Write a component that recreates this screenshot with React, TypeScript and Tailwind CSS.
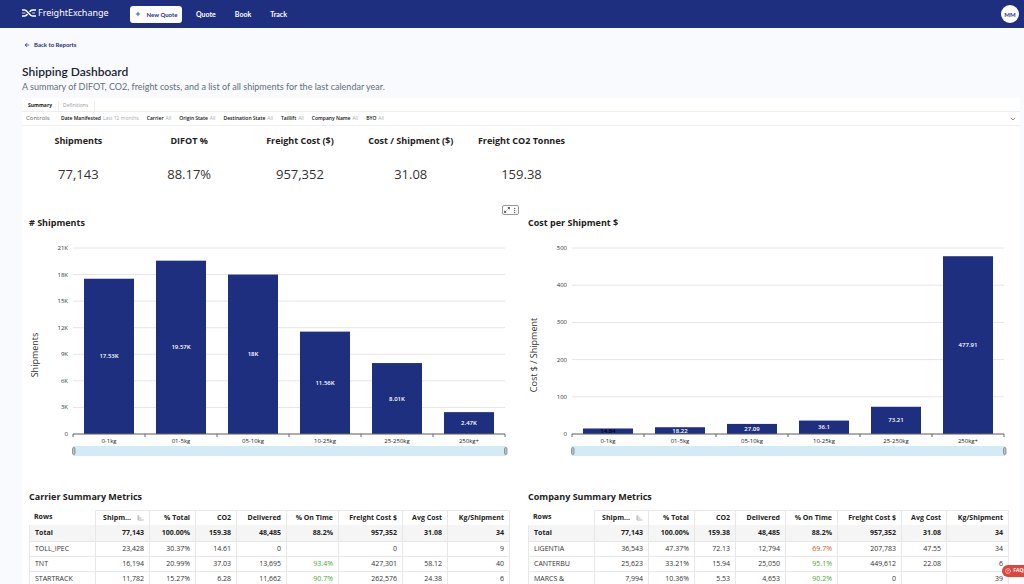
import React, { useState } from 'react';
import { ArrowLeft, ChevronDown, CircleHelp, EllipsisVertical, Plus } from 'lucide-react';
import clsx from 'clsx';

const filters = [
  { label: 'Date Manifested', value: 'Last 12 months' },
  { label: 'Carrier', value: 'All' },
  { label: 'Origin State', value: 'All' },
  { label: 'Destination State', value: 'All' },
  { label: 'Taillift', value: 'All' },
  { label: 'Company Name', value: 'All' },
  { label: 'BYO', value: 'All' },
];

const metrics = [
  { label: 'Shipments', value: '77,143' },
  { label: 'DIFOT %', value: '88.17%' },
  { label: 'Freight Cost ($)', value: '957,352' },
  { label: 'Cost / Shipment ($)', value: '31.08' },
  { label: 'Freight CO2 Tonnes', value: '159.38' },
];

type Bar = { name: string; value: number; label: string; dark?: boolean };

const shipments: Bar[] = [
  { name: '0-1kg', value: 17.53, label: '17.53K' },
  { name: '01-5kg', value: 19.57, label: '19.57K' },
  { name: '05-10kg', value: 18, label: '18K' },
  { name: '10-25kg', value: 11.56, label: '11.56K' },
  { name: '25-250kg', value: 8.01, label: '8.01K' },
  { name: '250kg+', value: 2.47, label: '2.47K' },
];

const costs: Bar[] = [
  { name: '0-1kg', value: 14.84, label: '14.84', dark: true },
  { name: '01-5kg', value: 18.22, label: '18.22' },
  { name: '05-10kg', value: 27.09, label: '27.09' },
  { name: '10-25kg', value: 36.1, label: '36.1' },
  { name: '25-250kg', value: 73.21, label: '73.21' },
  { name: '250kg+', value: 477.91, label: '477.91' },
];

const columns = [
  { name: 'Rows', width: 'w-[67px]' },
  { name: 'Shipm...', width: 'w-[54px]' },
  { name: '% Total', width: 'w-[46px]' },
  { name: 'CO2', width: 'w-[41px]' },
  { name: 'Delivered', width: 'w-[50px]' },
  { name: '% On Time', width: 'w-[52px]' },
  { name: 'Freight Cost $', width: 'w-[64px]' },
  { name: 'Avg Cost', width: 'w-[45px]' },
  { name: 'Kg/Shipment', width: 'w-[62px]' },
];

const total = ['Total', '77,143', '100.00%', '159.38', '48,485', '88.2%', '957,352', '31.08', '34'];

const carrierRows = [
  total,
  ['TOLL_IPEC', '23,428', '30.37%', '14.61', '0', '', '0', '', '9'],
  ['TNT', '16,194', '20.99%', '37.03', '13,695', '93.4%', '427,301', '58.12', '40'],
  ['STARTRACK', '11,782', '15.27%', '6.28', '11,662', '90.7%', '262,576', '24.38', '6'],
];

const companyRows = [
  total,
  ['LIGENTIA', '36,543', '47.37%', '72.13', '12,794', '69.7%', '207,783', '47.55', '34'],
  ['CANTERBU', '25,623', '33.21%', '15.94', '25,050', '95.1%', '449,612', '22.08', '6'],
  ['MARCS &', '7,994', '10.36%', '5.53', '4,653', '90.2%', '0', '', '39'],
];

function Logo() {
  return (
    <a href="#" className="flex w-[108px] items-center gap-0.5 pb-0.5 text-white">
      <svg width="14" height="8" viewBox="0 0 14 8" fill="none" stroke="currentColor" strokeWidth="1.5">
        <path d="M0 1h2.6C5.6 1 7.4 7 10.6 7H14" />
        <path d="M0 7h2.6C3.8 7 4.8 6 5.6 5M7.6 2.8C8.4 1.8 9.4 1 10.6 1H14" />
        <path d="M0 4h3.4M10 4h3" strokeWidth="0.8" />
      </svg>
      <span className="font-['Noto_Sans',sans-serif] text-[9px] leading-3">FreightExchange</span>
    </a>
  );
}

function Header() {
  return (
    <header className="flex h-7 items-center bg-[#1f2f80] pl-[22px] pr-[5px] font-['Lato',sans-serif] text-white">
      <Logo />
      <button className="flex h-[17px] w-[52px] items-center justify-center gap-1.5 rounded-[3px] bg-white text-[6px] font-bold text-[#1f2f80]">
        <Plus size={6} strokeWidth={3} />
        New Quote
      </button>
      <nav className="ml-3.5 flex gap-[19px] text-[7px] font-bold">
        <a href="#">Quote</a>
        <a href="#">Book</a>
        <a href="#">Track</a>
      </nav>
      <button className="ml-auto flex size-[18px] items-center justify-center rounded-full bg-white text-[6px] font-bold text-[#1f2f80]">
        MM
      </button>
    </header>
  );
}

function Controls() {
  const [open, setOpen] = useState(false);

  return (
    <div className="flex h-3.5 items-center border-b border-[#f0f0f0] pl-1 pr-[3px]">
      <span className="w-[35px] text-[6px] text-[#666]">Controls</span>
      <div className="flex gap-2 text-[5px]">
        {filters.map((filter) => (
          <div key={filter.label} className="flex gap-0.5 whitespace-nowrap">
            <span className="font-semibold text-[#111]">{filter.label}</span>
            <span className="text-[#aaa]">{filter.value}</span>
          </div>
        ))}
      </div>
      <button className="ml-auto text-[#555]" aria-label="Toggle controls" onClick={() => setOpen(!open)}>
        <ChevronDown size={8} className={clsx(open && 'rotate-180')} />
      </button>
    </div>
  );
}

const LEFT = 44;
const BASE = 196;
const HEIGHT = 186;
const STEP = 72;

function BarChart({ title, data, max, ticks, unit }: { title: string; data: Bar[]; max: number; ticks: number[]; unit: string }) {
  const right = LEFT + STEP * data.length;

  return (
    <svg viewBox="0 0 481 222" className="block h-auto w-full" role="img" aria-label={title}>
      <text transform="translate(9 117) rotate(-90)" textAnchor="middle" className="fill-[#333] text-[9px]">
        {title}
      </text>
      {ticks.map((tick) => {
        const y = BASE - (tick / max) * HEIGHT;
        return (
          <g key={tick}>
            <line x1={LEFT} x2={right} y1={y} y2={y} stroke="#e6e6e6" />
            <text x={LEFT - 5} y={y + 2} textAnchor="end" className="fill-[#333] text-[6px]">
              {tick === 0 ? '0' : `${tick}${unit}`}
            </text>
          </g>
        );
      })}
      {data.map((bar, i) => {
        const height = (bar.value / max) * HEIGHT;
        const center = LEFT + STEP * i + STEP / 2;
        return (
          <g key={bar.name}>
            <rect x={center - 25} y={BASE - height} width={50} height={height} fill="#1f2f80" />
            <text
              x={center}
              y={BASE - height / 2 + 2}
              textAnchor="middle"
              className={clsx('text-[6px] font-semibold', bar.dark ? 'fill-black' : 'fill-white')}
            >
              {bar.label}
            </text>
            <text x={center} y={BASE + 9} textAnchor="middle" className="fill-[#222] text-[6px]">
              {bar.name}
            </text>
          </g>
        );
      })}
      <line x1={LEFT} x2={right} y1={BASE} y2={BASE} stroke="#666" />
      {[...data, null].map((_, i) => (
        <line key={i} x1={LEFT + STEP * i} x2={LEFT + STEP * i} y1={BASE} y2={BASE + 3} stroke="#666" />
      ))}
      <rect x={LEFT} y={BASE + 12} width={right - LEFT + 1} height={10} fill="#d3ebf5" />
      {[LEFT, right].map((x) => (
        <rect key={x} x={x - 0.5} y={BASE + 13.5} width={2.5} height={7} rx={1.2} fill="#b9c4c8" stroke="#777" strokeWidth={0.7} />
      ))}
    </svg>
  );
}

function SortIcon() {
  return (
    <svg width="7" height="6" viewBox="0 0 7 6" fill="none" stroke="#999" strokeWidth="0.7">
      <path d="M1 0.5v4.5M1 1h1.5M1 3h3.5M1 5h5.5" />
    </svg>
  );
}

function MetricsTable({ title, rows }: { title: string; rows: string[][] }) {
  return (
    <table className="w-full table-fixed border-separate border-spacing-0 text-[7px] leading-[10px] text-[#333]" aria-label={title}>
      <thead>
        <tr className="h-[15px]">
          {columns.map((column, i) => (
            <th
              key={column.name}
              className={clsx(
                column.width,
                'whitespace-nowrap border-r border-[#e8e8e8] p-0 font-bold text-[#222]',
                i === 0 ? 'pb-0.5 pl-[5px] text-left' : 'border-t pr-[5px] text-right',
              )}
            >
              {i === 1 ? (
                <span className="flex items-center justify-end gap-1.5">
                  {column.name}
                  <SortIcon />
                </span>
              ) : (
                column.name
              )}
            </th>
          ))}
        </tr>
      </thead>
      <tbody>
        {rows.map((row, r) => (
          <tr key={row[0]} className={clsx(r === 0 ? 'h-[17px] bg-[#f5f5f5] font-bold text-[#222]' : 'h-[15px]')}>
            {row.map((cell, i) => (
              <td
                key={i}
                className={clsx(
                  'whitespace-nowrap border-b border-r border-[#e8e8e8] p-0',
                  i === 0 ? 'border-l pl-[5px]' : 'pr-[5px] text-right',
                  i === 5 && r > 0 && (parseFloat(cell) < 80 ? 'text-[#d9532c]' : 'text-[#3fae29]'),
                )}
              >
                {cell}
              </td>
            ))}
          </tr>
        ))}
      </tbody>
    </table>
  );
}

export default function App() {
  return (
    <div className="min-h-screen bg-[#f8fafd] font-['Open_Sans',sans-serif]">
      <Header />
      <main className="pl-[22px] pr-1">
        <div className="font-['Lato',sans-serif]">
          <a href="#" className="flex items-center gap-1 pl-0.5 pt-3 text-[6px] font-bold leading-[10px] text-[#1f2f80]">
            <ArrowLeft size={6} strokeWidth={3} />
            Back to Reports
          </a>
          <h1 className="mt-3.5 text-[12px] font-semibold leading-4 text-[#1a1f36]">Shipping Dashboard</h1>
          <p className="pb-1.5 pt-0.5 text-[9px] leading-[10px] text-[#64707f]">
            A summary of DIFOT, CO2, freight costs, and a list of all shipments for the last calendar year.
          </p>
        </div>

        <section className="bg-white">
          <div className="flex h-3.5 items-end border-b border-[#eee] text-[5px]">
            <button className="h-[10px] px-1.5 font-bold text-[#222]">Summary</button>
            <button className="h-[10px] border-x border-[#eee] px-1 pr-1.5 text-[#999]">Definitions</button>
          </div>
          <Controls />

          <div className="ml-px grid grid-cols-9 pt-[9px] text-center text-[#333]">
            {metrics.map((metric) => (
              <div key={metric.label} className="whitespace-nowrap">
                <h2 className="text-[9px] font-bold leading-3 text-[#222]">{metric.label}</h2>
                <p className="mt-[17px] text-[13px] leading-5">{metric.value}</p>
              </div>
            ))}
          </div>

          <div className="relative mt-[33px] grid grid-cols-2">
            <div className="absolute -top-3 left-[480px] flex h-[10px] w-[17px] items-center justify-around rounded-xs border border-[#999] bg-white text-[#444]">
              <button aria-label="Expand">
                <svg width="6" height="6" viewBox="0 0 6 6" fill="none" stroke="currentColor" strokeWidth="0.8" className="block">
                  <path d="M3.8 0.5h1.7v1.7M5.5 0.5L3.6 2.4M2.2 5.5H0.5V3.8M0.5 5.5l1.9-1.9" />
                </svg>
              </button>
              <button aria-label="More options">
                <EllipsisVertical size={7} className="block" />
              </button>
            </div>
            <div className="pl-[7px] pr-[11px]">
              <h3 className="mb-[9px] text-[9px] font-bold leading-3 text-[#222]"># Shipments</h3>
              <BarChart title="Shipments" data={shipments} max={21} ticks={[0, 3, 6, 9, 12, 15, 18, 21]} unit="K" />
            </div>
            <div className="pl-[7px] pr-[11px]">
              <h3 className="mb-[9px] text-[9px] font-bold leading-3 text-[#222]">Cost per Shipment $</h3>
              <BarChart title="Cost $ / Shipment" data={costs} max={500} ticks={[0, 100, 200, 300, 400, 500]} unit="" />
            </div>
            <div className="pl-[7px] pr-[11px] pt-[31px]">
              <h3 className="mb-[7px] text-[9px] font-bold leading-3 text-[#222]">Carrier Summary Metrics</h3>
              <MetricsTable title="Carrier Summary Metrics" rows={carrierRows} />
            </div>
            <div className="pl-[7px] pr-[11px] pt-[31px]">
              <h3 className="mb-[7px] text-[9px] font-bold leading-3 text-[#222]">Company Summary Metrics</h3>
              <MetricsTable title="Company Summary Metrics" rows={companyRows} />
            </div>
          </div>
        </section>
      </main>

      <button className="fixed -right-1.5 bottom-[7px] flex h-3 items-center gap-0.5 rounded-l-md bg-[#e0443a] pl-[3px] pr-1 text-[5px] font-bold text-white">
        <CircleHelp size={6} />
        FAQs
      </button>
    </div>
  );
}
